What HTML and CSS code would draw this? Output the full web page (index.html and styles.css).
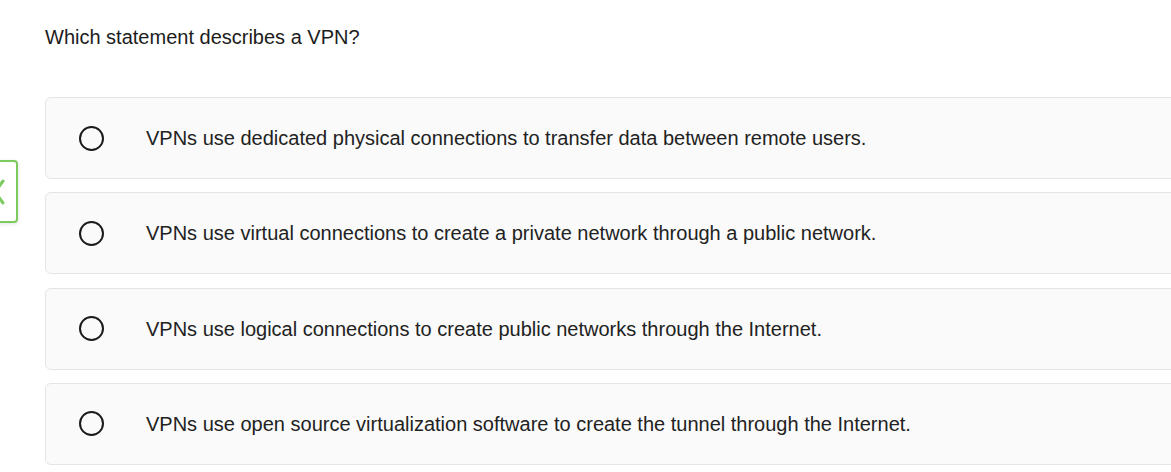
FILE: index.html
```html
<!DOCTYPE html>
<html>
<head>
<meta charset="utf-8">
<link rel="stylesheet" href="styles.css">
</head>
<body>
<div class="page">
  <p class="question">Which statement describes a VPN?</p>
  <div class="options">
    <label class="option"><span class="radio"></span><span class="text">VPNs use dedicated physical connections to transfer data between remote users.</span></label>
    <label class="option"><span class="radio"></span><span class="text">VPNs use virtual connections to create a private network through a public network.</span></label>
    <label class="option"><span class="radio"></span><span class="text">VPNs use logical connections to create public networks through the Internet.</span></label>
    <label class="option"><span class="radio"></span><span class="text">VPNs use open source virtualization software to create the tunnel through the Internet.</span></label>
  </div>
  <button class="prev-tab" aria-label="Previous">
    <svg width="14" height="30" viewBox="0 0 14 30"><path d="M9 4 L1 15 L9 26" fill="none" stroke="#7ccb5f" stroke-width="3" stroke-linecap="round" stroke-linejoin="round"/></svg>
  </button>
</div>
</body>
</html>
```
FILE: styles.css
```css
html, body {
  margin: 0;
  padding: 0;
  background: #ffffff;
  overflow: hidden;
}
.page {
  position: relative;
  width: 1171px;
  height: 472px;
  padding: 25px 0 0 45px;
  box-sizing: border-box;
  font-family: "Liberation Sans", Arial, sans-serif;
  color: #222222;
}
.question {
  margin: 0;
  font-size: 20px;
  line-height: 24px;
  color: #1c1c1c;
}
.options {
  margin-top: 48px;
  display: flex;
  flex-direction: column;
  gap: 13.33px;
  width: 1160px;
}
.option {
  display: flex;
  align-items: center;
  height: 82px;
  box-sizing: border-box;
  border: 1px solid #e3e5ea;
  border-radius: 6px;
  background: #fafafa;
  padding-left: 33px;
}
.radio {
  width: 25px;
  height: 25px;
  box-sizing: border-box;
  border: 2.5px solid #1a1a1a;
  border-radius: 50%;
  flex: none;
}
.text {
  margin-left: 42px;
  font-size: 20px;
  line-height: 24px;
  color: #222222;
}
.prev-tab {
  position: absolute;
  left: -6px;
  top: 160px;
  width: 24px;
  height: 63px;
  box-sizing: border-box;
  border: 2px solid #7ccb5f;
  border-radius: 4px;
  background: #ffffff;
  box-shadow: 0 1px 4px rgba(0,0,0,0.12);
  padding: 0;
  display: flex;
  align-items: center;
}
.prev-tab svg {
  display: block;
  margin-left: -2px;
}
```
